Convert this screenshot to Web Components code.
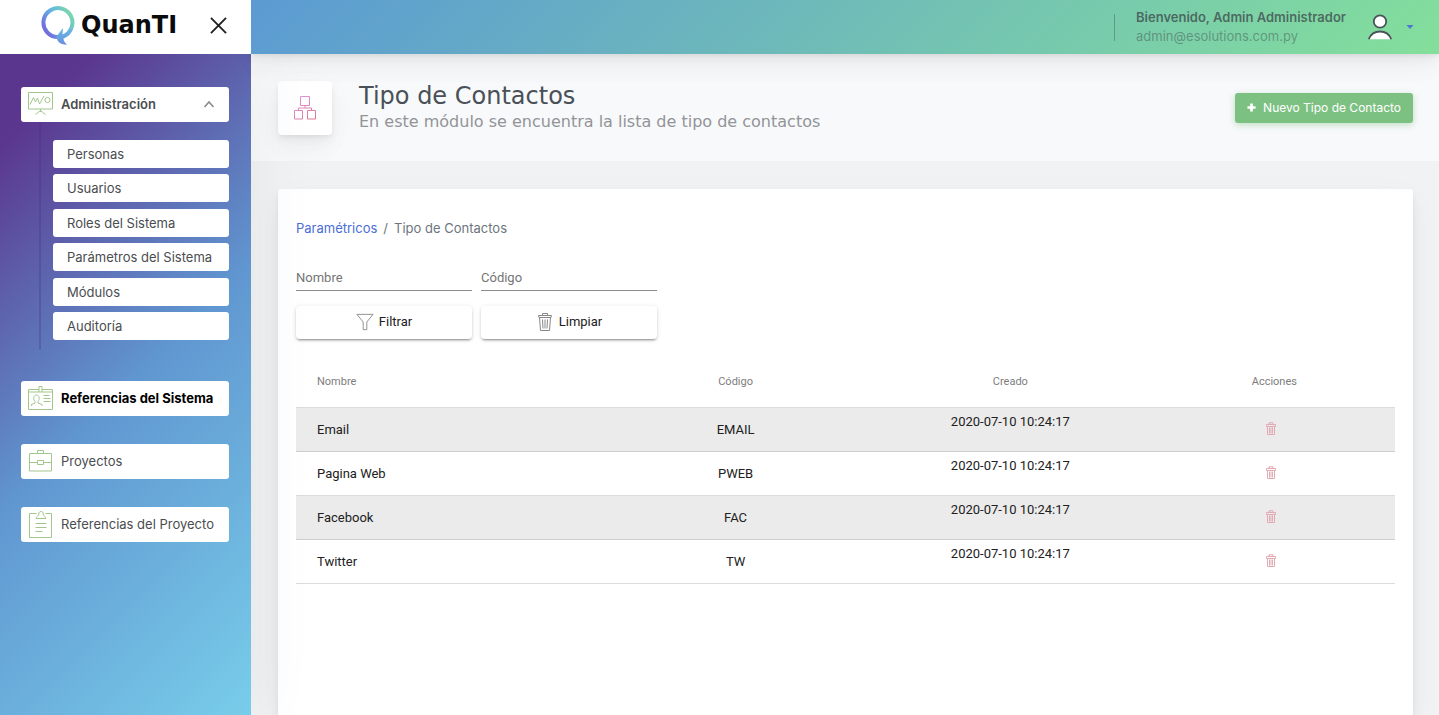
<!DOCTYPE html>
<html lang="es">
<head>
<meta charset="utf-8">
<title>QuanTI - Tipo de Contactos</title>
<style>
  html, body { margin: 0; height: 100%; }
  body { font-family: Inter, "Liberation Sans", sans-serif; font-size: 13px; color: #495057; background: #f1f2f4; }
</style>
</head>
<body>
<quanti-app>
  <app-brand slot="brand"></app-brand>
  <app-header slot="header" name="Bienvenido, Admin Administrador" mail="admin@esolutions.com.py"></app-header>
  <app-sidebar slot="sidebar">
    <nav-group open>
      <nav-item icon="board" strong caret>Administración</nav-item>
      <nav-item slot="children" small>Personas</nav-item>
      <nav-item slot="children" small>Usuarios</nav-item>
      <nav-item slot="children" small>Roles del Sistema</nav-item>
      <nav-item slot="children" small>Parámetros del Sistema</nav-item>
      <nav-item slot="children" small>Módulos</nav-item>
      <nav-item slot="children" small>Auditoría</nav-item>
    </nav-group>
    <nav-item icon="id" active>Referencias del Sistema</nav-item>
    <nav-item icon="case">Proyectos</nav-item>
    <nav-item icon="clip">Referencias del Proyecto</nav-item>
  </app-sidebar>
  <page-title>
    <span slot="title">Tipo de Contactos</span>
    <span slot="subtitle">En este módulo se encuentra la lista de tipo de contactos</span>
    <span slot="action">Nuevo Tipo de Contacto</span>
  </page-title>
  <content-card>
    <bread-crumb></bread-crumb>
    <filter-bar></filter-bar>
    <contact-table></contact-table>
  </content-card>
</quanti-app>
<script>
const define = (name, html, setup) => {
  const tpl = document.createElement('template');
  tpl.innerHTML = html;
  customElements.define(name, class extends HTMLElement {
    connectedCallback() {
      if (this.shadowRoot) return;
      this.attachShadow({ mode: 'open' }).append(tpl.content.cloneNode(true));
      if (setup) setup(this, this.shadowRoot);
    }
  });
};

const ICONS = {
  board: ['0 0 26 26', '<path d="M.5 1.500h24v16.500h-24zM12.500 18v3M12.500 19.500l-5 4M12.500 19.500l5 4M2 13.500l3.500-7 2 4.500 2-4 2 6 4.500-8"/><circle cx="19.500" cy="9" r="2.600"/>'],
  id: ['0 0 26 26', '<path d="M.5 4.500h10.500M14 4.500h10.500v20H.5v-20M.5 7h10.500M14 7h10.500M11 1.500h3v5.500h-3zM15.500 10.500h6M15.500 13.500h7M15.500 16.500h7"/><path d="M3.500 21v-1.500l3.500-1.500v-1.500c-2-2-1.500-6.500 1.500-6.500s3.500 4.500 1.500 6.500V18l4 1.500V21"/>'],
  case: ['0 0 26 26', '<path d="M1.500 5.500h22v17.500h-22zM9.500 5V2.500h6V5M1.500 14.500h8M15.500 14.500h8M9.500 12.500h6v4h-6z"/>'],
  clip: ['0 0 26 30', '<path d="M8.500 4.500h-7v24h22v-24h-6M7.500 14.500h11M7.500 18.500h11M7.500 22.500h7M8 9.500h10c0-2-3-2-3-5.500 0-2-4-2-4 0 0 3.500-3 3.500-3 5.500z"/>'],
  close: ['0 0 18 18', '<path d="M1 1l16 16M17 1L1 17"/>'],
  caret: ['0 0 12 8', '<path stroke-width="1.600" d="M1.500 7L6 2l4.500 5"/>'],
  plus: ['0 0 10 10', '<path d="M5 .5v9M.5 5h9"/>'],
  funnel: ['0 0 20 20', '<path d="M1 1.500h18l-7 8.500v8.500H8V10z"/>'],
  trash: ['0 0 16 20', '<path d="M1.500 3.500h13M1.500 3.500l.5 2h12l.5-2M5.500 3V1.500h5V3M2.500 5.500l1 13h9l1-13M5.500 7.500l.5 9M8 7.500v9M10.500 7.500l-.5 9"/>'],
  bin: ['0 0 10 13', '<path d="M.5 2.500h9v2h-9zM3 2V.8h4V2M1.500 4.500v8h7v-8M3.500 5.500v6M5 5.500v6M6.500 5.500v6"/>'],
  tree: ['0 0 22 24', '<defs><linearGradient id="g" x1="0" y1="0" x2="1" y2="1" gradientUnits="objectBoundingBox"><stop stop-color="#df98e8"/><stop offset="1" stop-color="#dc7488"/></linearGradient></defs><path stroke="url(#g)" d="M6.500.5h9v9h-9zM.5 14.500h8v8.500h-8zM13.500 14.500h8v8.500h-8zM11 9.500v2.500M4.500 14.500v-2.500h13v2.500"/>']
};

class AppIcon extends HTMLElement {
  connectedCallback() {
    if (this.shadowRoot) return;
    const [box, body] = ICONS[this.getAttribute('name')];
    this.attachShadow({ mode: 'open' }).innerHTML = `
      <style>:host{display:block;flex:none}svg{display:block;width:100%;height:100%;fill:none;stroke:currentColor;stroke-width:var(--stroke,1)}</style>
      <svg viewBox="${box}" aria-hidden="true">${body}</svg>`;
  }
}
customElements.define('app-icon', AppIcon);

define('quanti-app', `
  <style>
    :host { display: grid; grid-template: 54px 1fr / 251px minmax(0, 1fr); height: 100vh; overflow: hidden; }
    main { display: flex; flex-direction: column; min-height: 0; }
    ::slotted([slot=brand]) { z-index: 3; }
    ::slotted([slot=header]) { z-index: 2; }
    ::slotted([slot=sidebar]) { z-index: 1; }
  </style>
  <slot name="brand"></slot><slot name="header"></slot><slot name="sidebar"></slot>
  <main><slot></slot></main>`);

define('app-brand', `
  <style>
    :host { display: flex; align-items: center; justify-content: space-between; background: #fff; padding: 0 24px 4px 40px; }
    a { display: flex; align-items: center; gap: 5px; color: #0b0b0b; text-decoration: none; font: bold 24px/40px "DejaVu Sans", sans-serif; }
    svg { display: block; width: 36px; height: 40px; }
    button { border: 0; background: none; padding: 0; color: #222; }
    app-icon { width: 17px; height: 17px; --stroke: 2; }
  </style>
  <a href="#"><svg viewBox="0 0 36 40" aria-hidden="true">
    <defs><linearGradient id="q" x1="0" y1=".75" x2="1" y2=".1"><stop stop-color="#7468de"/><stop offset=".5" stop-color="#62b5e4"/><stop offset="1" stop-color="#7fdda3"/></linearGradient>
    <linearGradient id="t" x1="0" y1="0" x2="0" y2="1"><stop stop-color="#69bde0"/><stop offset="1" stop-color="#678fe0"/></linearGradient></defs>
    <path d="M18 32.100A14.500 14.500 0 1 1 31.200 23.500" fill="none" stroke="url(#q)" stroke-width="4"/>
    <path d="M23 23L16.500 31.500C17 36 19 39.700 27 39.700C24.500 37.500 23.500 35.500 23.500 33.500C28 32 31.500 28.500 33 24L29.300 22.500C28 26 26 28 22.500 29.500Z" fill="url(#t)"/>
  </svg><span>QuanTI</span></a>
  <button type="button" aria-label="Cerrar menú"><app-icon name="close"></app-icon></button>`);

define('app-header', `
  <style>
    :host { display: flex; justify-content: flex-end; align-items: center; padding-right: 25px;
      background: linear-gradient(135deg, #5b9ad3, #84df9b);
      box-shadow: 0 8px 35px rgba(4,9,20,.03), 0 15px 22px rgba(4,9,20,.03), 0 4px 9px rgba(4,9,20,.05), 0 2px 3px rgba(4,9,20,.03); }
    .who { border-left: 1px solid rgba(50,60,60,.35); padding-left: 21px; line-height: 19px; height: 27px; display: flex; flex-direction: column; justify-content: center; color: rgba(60,70,75,.75); }
    b { font-weight: 600; }
    .mail { color: rgba(60,70,75,.45); }
    button { display: flex; align-items: center; gap: 14px; border: 0; background: none; padding: 0; margin-left: 22px; }
    .face { width: 24px; height: 26px; display: block; }
    .tri { width: 8px; height: 4px; display: block; }
  </style>
  <div class="who"><b></b><span class="mail"></span></div>
  <button type="button" aria-label="Menú de usuario">
    <svg class="face" viewBox="0 0 24 26" fill="#fff" stroke="#4a5358" stroke-width="1.800"><circle cx="12" cy="7.500" r="6.200"/><path d="M.8 25.200C3 19.500 7 17.500 12 17.500s9 2 11.200 7.700"/></svg>
    <svg class="tri" viewBox="0 0 8 4"><path d="M.5 0h7L4 4z" fill="#4f74d8"/></svg>
  </button>`, (el, r) => {
    r.querySelector('b').textContent = el.getAttribute('name');
    r.querySelector('.mail').textContent = el.getAttribute('mail');
  });

define('app-sidebar', `
  <style>
    :host { display: block; background: linear-gradient(135deg, #5b368f 10%, #6096d0 50%, #78cdea 100%); box-shadow: 7px 0 60px rgba(0,0,0,.05); }
    nav { display: flex; flex-direction: column; gap: 28px; padding: 33px 22px 0 21px; }
  </style>
  <nav><slot></slot></nav>`);

define('nav-group', `
  <style>
    :host { display: block; margin-bottom: 3px; }
    .kids { display: flex; flex-direction: column; justify-content: space-between; height: 200px; margin-left: 18px; padding: 18px 0 10px 12px; border-left: 2px solid rgba(60,50,120,.28); }
  </style>
  <slot></slot><div class="kids"><slot name="children"></slot></div>`);

define('nav-item', `
  <style>
    :host { display: block; }
    a { box-sizing: border-box; display: flex; align-items: center; height: 35px; border-radius: 3px; background: #fff; color: #4a4d50; text-decoration: none; padding: 0 14px 2px 7px; }
    :host([small]) a { height: 28px; padding: 0 14px; }
    :host([strong]) a { font-weight: 600; }
    :host([active]) a { font-weight: 700; color: #000; }
    .label { flex: 1; white-space: nowrap; }
    .icon { width: 26px; height: 26px; margin-right: 7px; color: #a3c68c; }
    .icon[name=clip] { height: 30px; }
    .caret { width: 12px; height: 8px; color: #8a8a8a; }
  </style>
  <a href="#"><span class="label"><slot></slot></span></a>`, (el, r) => {
    const a = r.querySelector('a');
    const add = (name, cls, where) => {
      const i = document.createElement('app-icon');
      i.setAttribute('name', name); i.className = cls; a[where](i);
    };
    if (el.hasAttribute('icon')) add(el.getAttribute('icon'), 'icon', 'prepend');
    if (el.hasAttribute('caret')) add('caret', 'caret', 'append');
  });

define('page-title', `
  <style>
    :host { display: flex; align-items: center; height: 107px; padding: 0 26px 0 27px; background: #f8f9fb; flex: none; }
    .box { display: grid; place-items: center; width: 54px; height: 54px; background: #fff; border-radius: 4px; margin-right: 27px;
      box-shadow: 0 8px 35px rgba(4,9,20,.03), 0 15px 22px rgba(4,9,20,.03), 0 4px 9px rgba(4,9,20,.05), 0 2px 3px rgba(4,9,20,.03); }
    app-icon { width: 22px; height: 24px; }
    .text { flex: 1; }
    h1 { margin: 0; font: 24px/28px "DejaVu Sans", sans-serif; color: #495057; }
    p { margin: 0; font: 16px/24px "DejaVu Sans", sans-serif; color: #929497; }
    button { display: flex; align-items: center; gap: 7px; height: 30px; padding: 0 12px; border: 0; border-radius: 3px; background: #7dc182; color: #fff; font: 12px/16px Inter, sans-serif; box-shadow: 0 2px 7px rgba(60,160,70,.3); }
    button app-icon { width: 9px; height: 9px; --stroke: 3; }
  </style>
  <div class="box"><app-icon name="tree"></app-icon></div>
  <div class="text"><h1><slot name="title"></slot></h1><p><slot name="subtitle"></slot></p></div>
  <button type="button"><app-icon name="plus"></app-icon><slot name="action"></slot></button>`);

define('content-card', `
  <style>
    :host { display: block; flex: 1; margin: 28px 26px 0 27px; padding: 27px 18px 0; background: #fff; border-radius: 3px 3px 0 0;
      box-shadow: 0 8px 35px rgba(4,9,20,.03), 0 15px 22px rgba(4,9,20,.03), 0 4px 9px rgba(4,9,20,.05), 0 2px 3px rgba(4,9,20,.03); }
  </style>
  <slot></slot>`);

define('bread-crumb', `
  <style>
    :host { display: block; line-height: 24px; color: #6c757d; }
    nav { display: flex; gap: 6px; }
    a { color: #4a6ed6; text-decoration: none; }
  </style>
  <nav aria-label="Ruta"><a href="#">Paramétricos</a><span>/</span><span>Tipo de Contactos</span></nav>`);

define('filter-bar', `
  <style>
    :host { display: block; padding-top: 26px; }
    form { display: grid; grid-template-columns: 176px 176px; gap: 15px 9px; font-family: Roboto, sans-serif; }
    input { box-sizing: border-box; width: 100%; height: 25px; padding: 0 0 2px; border: 0; border-bottom: 1px solid #8c8c8c; border-radius: 0; background: none; outline: none; font: 13px/22px Roboto, sans-serif; }
    input::placeholder { color: #757575; opacity: 1; }
    button { display: flex; align-items: center; justify-content: center; gap: 5px; height: 33px; border: 0; border-radius: 4px; padding: 0 0 1px; background: #fff; color: #212121; font: 13px/20px Roboto, sans-serif;
      box-shadow: 0 3px 1px -2px rgba(0,0,0,.2), 0 2px 2px rgba(0,0,0,.14), 0 1px 5px rgba(0,0,0,.12); }
    app-icon { width: 18px; height: 20px; color: #888; }
  </style>
  <form>
    <label><input type="text" placeholder="Nombre" aria-label="Nombre"></label>
    <label><input type="text" placeholder="Código" aria-label="Código"></label>
    <button type="button"><app-icon name="funnel"></app-icon>Filtrar</button>
    <button type="button"><app-icon name="trash"></app-icon>Limpiar</button>
  </form>`);

define('contact-table', `
  <style>
    :host { display: block; padding-top: 17px; }
    table { width: 100%; table-layout: fixed; border-collapse: separate; border-spacing: 0; font: 13px/20px Roboto, sans-serif; color: #212121; }
    th, td { box-sizing: border-box; padding: 0; text-align: center; border-bottom: 1px solid #dcdcdc; }
    th { height: 52px; font-size: 11px; font-weight: 400; color: #7d7d7d; }
    td { height: 44px; }
    th:first-child, td:first-child { width: 27.5%; padding-left: 21px; text-align: left; }
    th:nth-child(2), th:nth-child(3) { width: 25%; }
    th:last-child { padding-left: 6px; }
    td:last-child { padding-bottom: 3px; }
    tbody tr:nth-child(odd) td { background: #ebebeb; border-color: #cfcfcf; }
    td.date { vertical-align: top; padding-top: 4px; }
    button { display: block; margin: 0 auto; padding: 0; border: 0; background: none; color: #e2abb3; }
    app-icon { width: 10px; height: 13px; }
  </style>
  <table>
    <thead><tr><th>Nombre</th><th>Código</th><th>Creado</th><th>Acciones</th></tr></thead>
    <tbody></tbody>
  </table>`, (el, r) => {
    const rows = [['Email', 'EMAIL'], ['Pagina Web', 'PWEB'], ['Facebook', 'FAC'], ['Twitter', 'TW']];
    r.querySelector('tbody').innerHTML = rows.map(([n, c]) => `<tr><td>${n}</td><td>${c}</td><td class="date">2020-07-10 10:24:17</td>
      <td><button type="button" aria-label="Eliminar ${n}"><app-icon name="bin"></app-icon></button></td></tr>`).join('');
  });
</script>
</body>
</html>
